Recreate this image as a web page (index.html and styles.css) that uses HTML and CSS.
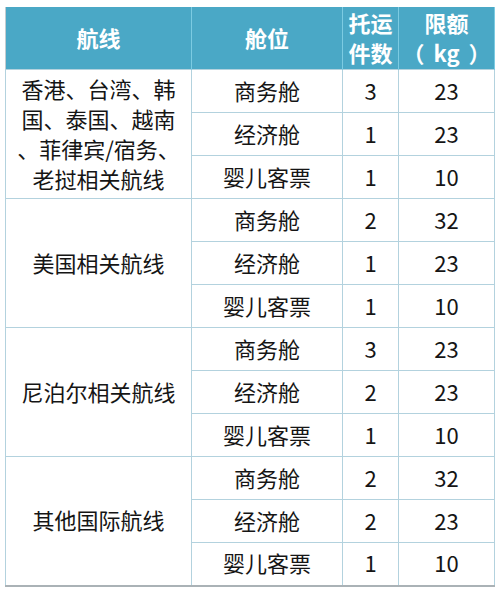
FILE: index.html
```html
<!DOCTYPE html>
<html lang="zh">
<head>
<meta charset="utf-8">
<link rel="stylesheet" href="styles.css">
</head>
<body>
<table class="bag">
  <colgroup>
    <col class="c1"><col class="c2"><col class="c3"><col class="c4">
  </colgroup>
  <thead>
    <tr>
      <th>航线</th>
      <th>舱位</th>
      <th>托运<br>件数</th>
      <th>限额<br>（<span class="kg">kg</span>）</th>
    </tr>
  </thead>
  <tbody>
    <tr><td rowspan="3" class="route">香港、台湾、韩<br>国、泰国、越南<br>、菲律宾/宿务、<br>老挝相关航线</td><td>商务舱</td><td>3</td><td>23</td></tr>
    <tr><td>经济舱</td><td>1</td><td>23</td></tr>
    <tr><td>婴儿客票</td><td>1</td><td>10</td></tr>
    <tr><td rowspan="3" class="route">美国相关航线</td><td>商务舱</td><td>2</td><td>32</td></tr>
    <tr><td>经济舱</td><td>1</td><td>23</td></tr>
    <tr><td>婴儿客票</td><td>1</td><td>10</td></tr>
    <tr><td rowspan="3" class="route">尼泊尔相关航线</td><td>商务舱</td><td>3</td><td>23</td></tr>
    <tr><td>经济舱</td><td>2</td><td>23</td></tr>
    <tr><td>婴儿客票</td><td>1</td><td>10</td></tr>
    <tr><td rowspan="3" class="route">其他国际航线</td><td>商务舱</td><td>2</td><td>32</td></tr>
    <tr><td>经济舱</td><td>2</td><td>23</td></tr>
    <tr><td>婴儿客票</td><td>1</td><td>10</td></tr>
  </tbody>
</table>
</body>
</html>
```
FILE: styles.css
```css
html, body {
  margin: 0;
  padding: 0;
  background: #ffffff;
}
body {
  padding: 7px 0 0 5px;
  font-family: "Noto Sans CJK SC", "Noto Sans", sans-serif;
  color: #151515;
}
.bag {
  border-collapse: collapse;
  table-layout: fixed;
  width: 489px;
  border-right: 1px solid #b9c3c8;
  border-bottom: 2px solid #aab2b6;
  border-left: 1px solid #c4ccd0;
}
.c1 { width: 186px; }
.c2 { width: 151px; }
.c3 { width: 56px; }
.c4 { width: 96px; }
.bag th {
  background: #4aa8c6;
  color: #ffffff;
  font-weight: bold;
  font-size: 22px;
  line-height: 30px;
  height: 60px;
  padding: 0 0 2px;
  text-align: center;
  vertical-align: middle;
  border-left: 1px solid #7ccbe2;
  border-right: 1px solid #7ccbe2;
  box-sizing: border-box;
  white-space: nowrap;
}
.bag th:first-child { border-left: none; }
.kg {
  margin: 0 9px;
}
.bag td {
  height: 43px;
  padding: 0 0 3px;
  font-size: 22px;
  line-height: 30px;
  text-align: center;
  vertical-align: middle;
  border: 1px solid #b3d2de;
  box-sizing: border-box;
}
.bag td.route {
  font-size: 22px;
  line-height: 30px;
  white-space: nowrap;
}
```
